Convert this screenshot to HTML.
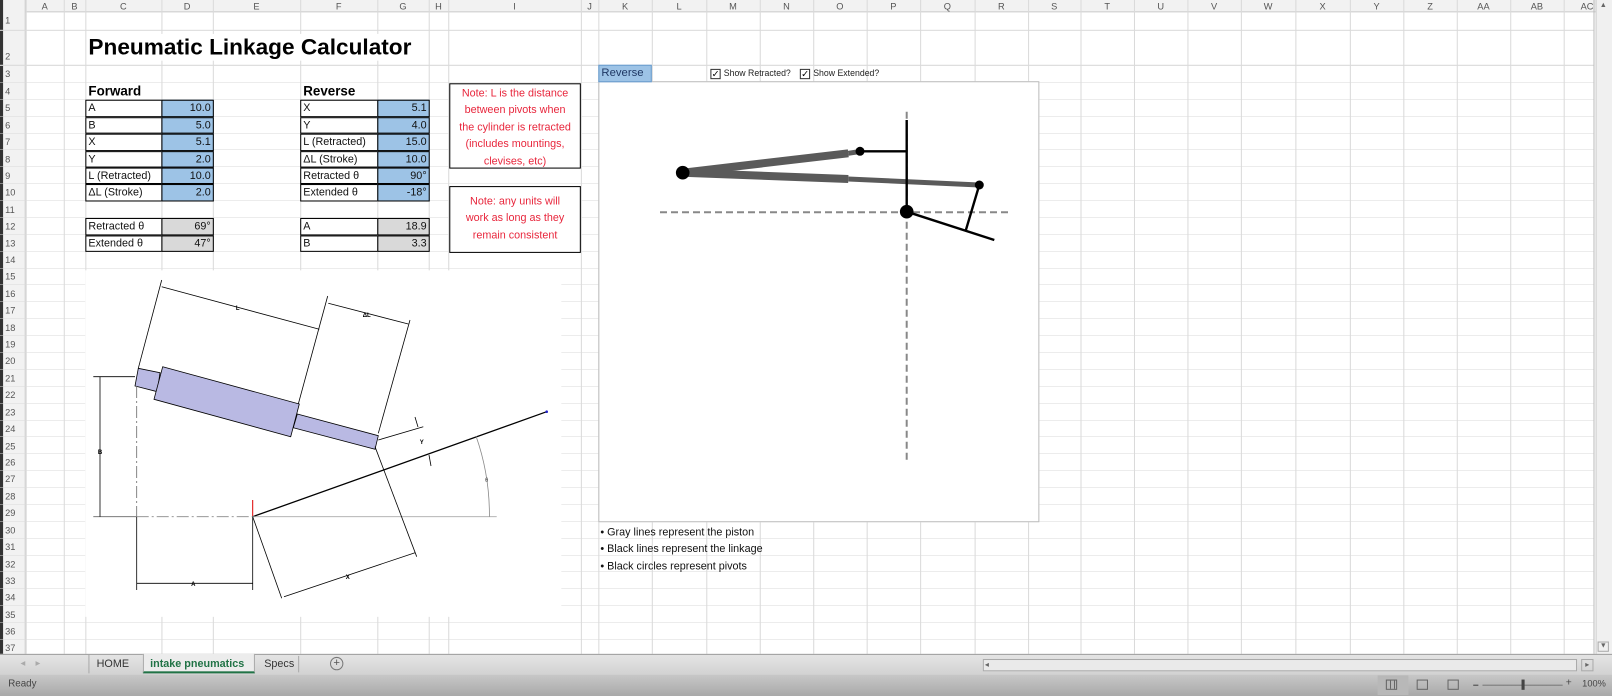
<!DOCTYPE html>
<html><head><meta charset="utf-8"><style>
*{margin:0;padding:0;box-sizing:border-box}
body{width:1612px;height:696px;overflow:hidden;background:#fff;font-family:"Liberation Sans",Arial,sans-serif;position:relative}
.s{position:absolute;left:0;top:0;width:1568px;height:677px;transform:scale(1.02806);transform-origin:0 0;overflow:hidden;background:#fff}
.a{position:absolute}
.v{position:absolute;top:0;width:1px;height:636px;background:#dadada}
.h{position:absolute;left:0;width:1550px;height:1px;background:#dadada}
.ch{position:absolute;top:0;height:12px;font-size:9px;color:#555;text-align:center;line-height:12px}
.rh{position:absolute;left:0;width:25px;font-size:9px;color:#555;padding-left:5px;line-height:16px}
.c{position:absolute;height:16.42px;border:1px solid #000;font-size:10.5px;line-height:15px;padding:0 2px;color:#111;background:#fff}
.n{text-align:right;background:#9dc3e6}
.g{text-align:right;background:#d9d9d9}
.note{position:absolute;border:1px solid #000;background:#fff;color:#e8263c;font-size:10.5px;text-align:center;line-height:16.4px}
</style></head><body>
<div class="s">
<div class="a" style="left:0;top:0;width:1568px;height:12px;background:#f2f2f2;border-bottom:1px solid #ccc"></div>
<div class="a" style="left:0;top:0;width:25px;height:636px;background:#f2f2f2;border-right:1px solid #ccc"></div>
<div class="a" style="left:0;top:0;width:3px;height:636px;background:#333"></div>
<div class="h" style="top:29px"></div><div class="h" style="top:63px"></div>
<div class="a" style="left:0;top:64.4px;width:1550px;height:572px;background:repeating-linear-gradient(to bottom,transparent 0 15.92px,#dadada 15.92px 16.42px)"></div>
<div class="v" style="left:25px"></div><div class="v" style="left:62px"></div><div class="v" style="left:83px"></div><div class="v" style="left:157px"></div><div class="v" style="left:207px"></div><div class="v" style="left:292px"></div><div class="v" style="left:367px"></div><div class="v" style="left:417px"></div><div class="v" style="left:436px"></div><div class="v" style="left:565px"></div><div class="v" style="left:582px"></div><div class="v" style="left:634px"></div><div class="v" style="left:687px"></div><div class="v" style="left:739px"></div><div class="v" style="left:791px"></div><div class="v" style="left:843px"></div><div class="v" style="left:895px"></div><div class="v" style="left:948px"></div><div class="v" style="left:1000px"></div><div class="v" style="left:1051px"></div><div class="v" style="left:1103px"></div><div class="v" style="left:1155px"></div><div class="v" style="left:1207px"></div><div class="v" style="left:1260px"></div><div class="v" style="left:1313px"></div><div class="v" style="left:1365px"></div><div class="v" style="left:1417px"></div><div class="v" style="left:1469px"></div><div class="v" style="left:1521px"></div><div class="v" style="left:1550px;background:#bbb"></div>
<div class="ch" style="left:25px;width:37px">A</div><div class="ch" style="left:62px;width:21px">B</div><div class="ch" style="left:83px;width:74px">C</div><div class="ch" style="left:157px;width:50px">D</div><div class="ch" style="left:207px;width:85px">E</div><div class="ch" style="left:292px;width:75px">F</div><div class="ch" style="left:367px;width:50px">G</div><div class="ch" style="left:417px;width:19px">H</div><div class="ch" style="left:436px;width:129px">I</div><div class="ch" style="left:565px;width:17px">J</div><div class="ch" style="left:582px;width:52px">K</div><div class="ch" style="left:634px;width:53px">L</div><div class="ch" style="left:687px;width:52px">M</div><div class="ch" style="left:739px;width:52px">N</div><div class="ch" style="left:791px;width:52px">O</div><div class="ch" style="left:843px;width:52px">P</div><div class="ch" style="left:895px;width:53px">Q</div><div class="ch" style="left:948px;width:52px">R</div><div class="ch" style="left:1000px;width:51px">S</div><div class="ch" style="left:1051px;width:52px">T</div><div class="ch" style="left:1103px;width:52px">U</div><div class="ch" style="left:1155px;width:52px">V</div><div class="ch" style="left:1207px;width:53px">W</div><div class="ch" style="left:1260px;width:53px">X</div><div class="ch" style="left:1313px;width:52px">Y</div><div class="ch" style="left:1365px;width:52px">Z</div><div class="ch" style="left:1417px;width:52px">AA</div><div class="ch" style="left:1469px;width:52px">AB</div><div class="ch" style="left:1521px;width:29px;text-align:right">AC</div>
<div class="a" style="left:1552px;top:0;width:16px;height:636px;background:#f0f0f0;border-left:1px solid #ccc"></div>
<div class="a" style="left:1554px;top:2px;width:11px;height:10px;font-size:7px;color:#666;text-align:center">▲</div>
<div class="a" style="left:1554px;top:624px;width:11px;height:10px;font-size:7px;color:#666;text-align:center;border:1px solid #aaa">▼</div>
<div class="rh" style="top:12px">1</div><div class="rh" style="top:47px">2</div><div class="rh" style="top:64px">3</div>
<div class="rh" style="top:81px">4</div><div class="rh" style="top:97px">5</div><div class="rh" style="top:114px">6</div><div class="rh" style="top:130px">7</div><div class="rh" style="top:147px">8</div><div class="rh" style="top:163px">9</div><div class="rh" style="top:179px">10</div><div class="rh" style="top:196px">11</div><div class="rh" style="top:212px">12</div><div class="rh" style="top:229px">13</div><div class="rh" style="top:245px">14</div><div class="rh" style="top:261px">15</div><div class="rh" style="top:278px">16</div><div class="rh" style="top:294px">17</div><div class="rh" style="top:311px">18</div><div class="rh" style="top:327px">19</div><div class="rh" style="top:343px">20</div><div class="rh" style="top:360px">21</div><div class="rh" style="top:376px">22</div><div class="rh" style="top:393px">23</div><div class="rh" style="top:409px">24</div><div class="rh" style="top:426px">25</div><div class="rh" style="top:442px">26</div><div class="rh" style="top:458px">27</div><div class="rh" style="top:475px">28</div><div class="rh" style="top:491px">29</div><div class="rh" style="top:508px">30</div><div class="rh" style="top:524px">31</div><div class="rh" style="top:541px">32</div><div class="rh" style="top:557px">33</div><div class="rh" style="top:573px">34</div><div class="rh" style="top:590px">35</div><div class="rh" style="top:606px">36</div><div class="rh" style="top:622px">37</div>

<div class="a" style="left:86px;top:33px;font-size:22px;font-weight:bold;color:#000;background:#fff;padding-right:4px">Pneumatic Linkage Calculator</div>
<div class="a" style="left:86px;top:81px;font-size:13px;font-weight:bold">Forward</div>
<div class="a" style="left:295px;top:81px;font-size:13px;font-weight:bold">Reverse</div>

<div class="c" style="left:83px;top:97.2px;width:75px">A</div><div class="c n" style="left:157px;top:97.2px;width:51px">10.0</div>
<div class="c" style="left:83px;top:113.6px;width:75px">B</div><div class="c n" style="left:157px;top:113.6px;width:51px">5.0</div>
<div class="c" style="left:83px;top:130.1px;width:75px">X</div><div class="c n" style="left:157px;top:130.1px;width:51px">5.1</div>
<div class="c" style="left:83px;top:146.5px;width:75px">Y</div><div class="c n" style="left:157px;top:146.5px;width:51px">2.0</div>
<div class="c" style="left:83px;top:162.9px;width:75px">L (Retracted)</div><div class="c n" style="left:157px;top:162.9px;width:51px">10.0</div>
<div class="c" style="left:83px;top:179.3px;width:75px">ΔL (Stroke)</div><div class="c n" style="left:157px;top:179.3px;width:51px">2.0</div>
<div class="c" style="left:83px;top:212.2px;width:75px">Retracted θ</div><div class="c g" style="left:157px;top:212.2px;width:51px">69°</div>
<div class="c" style="left:83px;top:228.6px;width:75px">Extended θ</div><div class="c g" style="left:157px;top:228.6px;width:51px">47°</div>
<div class="c" style="left:292px;top:97.2px;width:76px">X</div><div class="c n" style="left:367px;top:97.2px;width:51px">5.1</div>
<div class="c" style="left:292px;top:113.6px;width:76px">Y</div><div class="c n" style="left:367px;top:113.6px;width:51px">4.0</div>
<div class="c" style="left:292px;top:130.1px;width:76px">L (Retracted)</div><div class="c n" style="left:367px;top:130.1px;width:51px">15.0</div>
<div class="c" style="left:292px;top:146.5px;width:76px">ΔL (Stroke)</div><div class="c n" style="left:367px;top:146.5px;width:51px">10.0</div>
<div class="c" style="left:292px;top:162.9px;width:76px">Retracted θ</div><div class="c n" style="left:367px;top:162.9px;width:51px">90°</div>
<div class="c" style="left:292px;top:179.3px;width:76px">Extended θ</div><div class="c n" style="left:367px;top:179.3px;width:51px">-18°</div>
<div class="c" style="left:292px;top:212.2px;width:76px">A</div><div class="c g" style="left:367px;top:212.2px;width:51px">18.9</div>
<div class="c" style="left:292px;top:228.6px;width:76px">B</div><div class="c g" style="left:367px;top:228.6px;width:51px">3.3</div>

<div class="note" style="left:437px;top:81px;width:128px;height:83px;padding-top:1px">Note: L is the distance<br>between pivots when<br>the cylinder is retracted<br>(includes mountings,<br>clevises, etc)</div>
<div class="note" style="left:437px;top:181px;width:128px;height:65px;padding-top:6px">Note: any units will<br>work as long as they<br>remain consistent</div>

<div class="a" style="left:83px;top:263px;width:463px;height:337px;background:#fff"></div>
<div class="a" style="left:582px;top:79px;width:429px;height:429px;background:#fff;border:1px solid #bcbcbc"></div>
<div class="a" style="left:582px;top:63px;width:52px;height:17px;background:#9dc3e6;border:1px solid #6a9ccc;font-size:11px;color:#1f3864;padding-left:2px;line-height:15px">Reverse</div>
<div class="a" style="left:691px;top:67px;width:10px;height:10px;border:1px solid #333;background:#fff;font-size:9px;line-height:8px;text-align:center">✓</div>
<div class="a" style="left:704px;top:66px;font-size:8.5px;color:#222">Show Retracted?</div>
<div class="a" style="left:778px;top:67px;width:10px;height:10px;border:1px solid #333;background:#fff;font-size:9px;line-height:8px;text-align:center">✓</div>
<div class="a" style="left:791px;top:66px;font-size:8.5px;color:#222">Show Extended?</div>
<div class="a" style="left:584px;top:510px;font-size:10.5px;line-height:16.4px;color:#111">• Gray lines represent the piston<br>• Black lines represent the linkage<br>• Black circles represent pivots</div>

<div class="a" style="left:0;top:636px;width:1568px;height:20px;background:linear-gradient(#e4e4e4,#d2d2d2);border-top:1px solid #999"></div>
<div class="a" style="left:20px;top:640px;font-size:9px;color:#aaa">◂&nbsp;&nbsp;&nbsp;&nbsp;▸</div>
<div class="a" style="left:86px;top:637px;width:1px;height:18px;background:#aaa"></div>
<div class="a" style="left:94px;top:640px;font-size:10.5px;color:#333">HOME</div>
<div class="a" style="left:139px;top:636px;width:109px;height:19px;background:#ececec;border-bottom:2px solid #217346;border-left:1px solid #aaa;border-right:1px solid #aaa"></div>
<div class="a" style="left:146px;top:640px;font-size:10.5px;color:#217346;font-weight:bold">intake pneumatics</div>
<div class="a" style="left:257px;top:640px;font-size:10.5px;color:#333">Specs</div>
<div class="a" style="left:290px;top:638px;width:1px;height:16px;background:#aaa"></div>
<div class="a" style="left:321px;top:639px;width:13px;height:13px;border:1px solid #777;border-radius:50%;font-size:11px;line-height:11px;text-align:center;color:#555">+</div>
<div class="a" style="left:956px;top:641px;width:578px;height:12px;background:#eaeaea;border:1px solid #aaa"></div>
<div class="a" style="left:958px;top:642px;font-size:8px;color:#666">◂</div>
<div class="a" style="left:1538px;top:641px;width:12px;height:12px;border:1px solid #aaa;font-size:8px;color:#666;text-align:center;line-height:10px">▸</div>
<div class="a" style="left:0;top:656px;width:1568px;height:21px;background:linear-gradient(#c8c8c8,#a9a9a9)"></div>
<div class="a" style="left:8px;top:660px;font-size:9.5px;color:#444">Ready</div>
<div class="a" style="left:1340px;top:657px;width:30px;height:19px;background:#b8b8b8"></div>
<div class="a" style="left:1348px;top:661px;width:11px;height:10px;border:1px solid #666;background:repeating-linear-gradient(90deg,transparent 0 3px,#666 3px 4px)"></div>
<div class="a" style="left:1378px;top:661px;width:11px;height:10px;border:1px solid #666"></div>
<div class="a" style="left:1408px;top:661px;width:11px;height:10px;border:1px solid #666"></div>
<div class="a" style="left:1433px;top:666px;width:5px;height:1px;background:#444"></div>
<div class="a" style="left:1442px;top:666px;width:78px;height:1px;background:#777"></div>
<div class="a" style="left:1480px;top:661px;width:3px;height:10px;background:#444"></div>
<div class="a" style="left:1523px;top:659px;font-size:10px;color:#444">+</div>
<div class="a" style="left:1539px;top:660px;font-size:9px;color:#444">100%</div>
</div>

<svg class="a" style="left:0;top:0" width="1612" height="696" viewBox="0 0 1612 696">
<g stroke="#000" stroke-width="0.8" fill="none">
<polygon points="138.3,368.3 160,372.7 157.3,391.7 135,386" fill="#b9b9e3"/>
<polygon points="162.7,366.7 299.3,404 290.7,436.7 154,399.3" fill="#b9b9e3"/>
<polygon points="297.3,414 378.3,435.7 375,449.3 293.3,427.7" fill="#b9b9e3"/>
<line x1="161.7" y1="280" x2="138.3" y2="368.3"/>
<line x1="327.7" y1="296" x2="298.3" y2="404"/>
<line x1="161.7" y1="286.7" x2="319.3" y2="329.3"/>
<line x1="328.3" y1="303.3" x2="408.3" y2="324"/>
<line x1="410" y1="320" x2="378.3" y2="433.3"/>
<line x1="252.7" y1="516.7" x2="546.7" y2="411.7" stroke-width="1.3"/>
<line x1="93.3" y1="516.7" x2="136.7" y2="516.7" stroke="#666"/>
<line x1="136.7" y1="516.7" x2="252.7" y2="516.7" stroke="#888" stroke-dasharray="12,3,2,3"/>
<line x1="252.7" y1="516.7" x2="496.7" y2="516.7" stroke="#aaa"/>
<line x1="136.7" y1="386" x2="136.7" y2="516" stroke="#666" stroke-dasharray="12,3,2,3"/>
<line x1="136.7" y1="516.7" x2="136.7" y2="590"/>
<line x1="93.3" y1="376.7" x2="135" y2="376.7"/>
<line x1="100" y1="376.7" x2="100" y2="516.7"/>
<line x1="136.7" y1="583.3" x2="252.7" y2="583.3"/>
<line x1="252.7" y1="516.7" x2="252.7" y2="590"/>
<line x1="252.7" y1="516.7" x2="281.7" y2="598.3"/>
<line x1="375" y1="446.7" x2="416.7" y2="556.7"/>
<line x1="284" y1="596.7" x2="415" y2="552.7"/>
<line x1="378.3" y1="440" x2="423.3" y2="426.7"/>
<line x1="415" y1="417" x2="418" y2="427"/>
<line x1="429" y1="455" x2="431" y2="466"/>
<path d="M489.4,516.7 A236.7,236.7 0 0 0 476,436" stroke="#888"/>
</g>
<line x1="252.7" y1="500" x2="252.7" y2="516" stroke="#d00" stroke-width="1"/>
<circle cx="546.7" cy="411.7" r="1.3" fill="#22c"/>
<g font-family="Liberation Sans,sans-serif" font-size="6" font-weight="bold" fill="#000" text-anchor="middle">
<text x="237.7" y="310">L</text><text x="366.7" y="317">ΔL</text><text x="100" y="454">B</text><text x="193.3" y="586">A</text><text x="347.7" y="579">X</text><text x="421.7" y="444">Y</text><text x="486.7" y="482" font-weight="normal" fill="#555">θ</text>
</g>
<g stroke="#888" stroke-width="2" stroke-dasharray="7,4" fill="none">
<line x1="660" y1="212.3" x2="1008" y2="212.3"/>
<line x1="906.7" y1="111.7" x2="906.7" y2="460"/>
</g>
<g stroke="#5a5a5a" stroke-linecap="butt">
<line x1="682.7" y1="172.7" x2="848.3" y2="153.3" stroke-width="8"/>
<line x1="848.3" y1="153.3" x2="860" y2="151.5" stroke-width="5"/>
<line x1="682.7" y1="172.7" x2="848.3" y2="179" stroke-width="8"/>
<line x1="848.3" y1="179" x2="979.3" y2="185" stroke-width="5"/>
</g>
<g stroke="#000" stroke-width="2.4">
<line x1="860" y1="151.3" x2="906.7" y2="151.3"/>
<line x1="906.7" y1="120" x2="906.7" y2="211.7"/>
<line x1="906.7" y1="211.7" x2="994.3" y2="240"/>
<line x1="979.3" y1="185" x2="965.7" y2="230.7"/>
</g>
<circle cx="682.7" cy="172.7" r="6.8" fill="#000"/>
<circle cx="906.7" cy="211.7" r="6.8" fill="#000"/>
<circle cx="860" cy="151.3" r="4.5" fill="#000"/>
<circle cx="979.3" cy="185" r="4.5" fill="#000"/>
</svg>
</body></html>
